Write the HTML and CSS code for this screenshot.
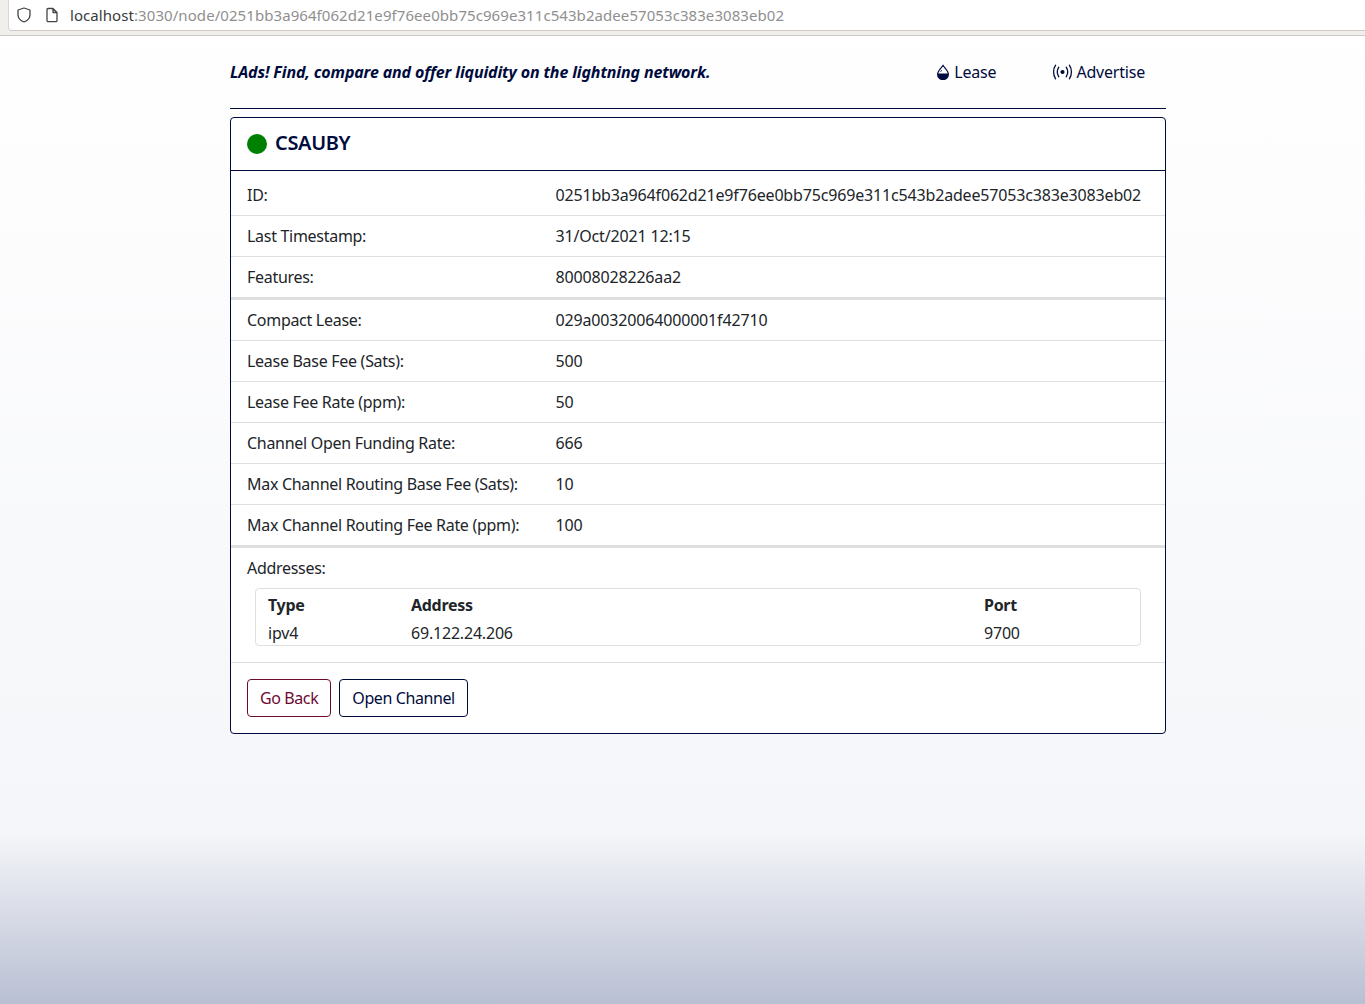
FILE: index.html
```html
<!DOCTYPE html>
<html lang="en">
<head>
<meta charset="utf-8">
<title>LAds</title>
<link rel="stylesheet" href="styles.css">
</head>
<body>
<div class="toolbar">
  <div class="urlbar">
    <svg class="shield" viewBox="0 0 16 16" width="16" height="16"><path d="M8 1 L14 3 V7.5 C14 11 11.5 13.8 8 15 C4.5 13.8 2 11 2 7.5 V3 Z" fill="none" stroke="#444" stroke-width="1.3" stroke-linejoin="round"/></svg>
    <svg class="doc" viewBox="0 0 16 16" width="16" height="16"><path d="M3 2.5 a1 1 0 0 1 1-1 h5 l4 4 v8 a1.2 1.2 0 0 1-1.2 1.2 h-7.6 a1.2 1.2 0 0 1-1.2-1.2 Z M9 1.5 v4 h4" fill="none" stroke="#444" stroke-width="1.3" stroke-linejoin="round"/></svg>
    <span class="url"><span class="host">localhost</span>:3030/node/0251bb3a964f062d21e9f76ee0bb75c969e311c543b2adee57053c383e3083eb02</span>
  </div>
</div>
<main class="page">
  <header class="header">
    <div class="tagline">LAds! Find, compare and offer liquidity on the lightning network.</div>
    <nav class="nav">
      <a class="nav-link lease">
        <svg viewBox="0 0 16 16" width="16" height="16"><path d="M8 1.2 C6.4 4 2.6 6.8 2.6 10.2 A5.4 5.4 0 0 0 13.4 10.2 C13.4 6.8 9.6 4 8 1.2 Z" fill="none" stroke="#000b3d" stroke-width="1.2" stroke-linejoin="round"/><path d="M2.6 9.4 H13.4 V10.2 A5.4 5.4 0 0 1 2.6 10.2 Z" fill="#000b3d"/><path d="M6.6 6.2 L5.6 7.8" fill="none" stroke="#000b3d" stroke-width="0.9"/></svg>
        Lease
      </a>
      <a class="nav-link advertise">
        <svg viewBox="0 0 21 16" width="21" height="16"><circle cx="10.5" cy="8" r="2.1" fill="#000b3d"/><path d="M6.8 3.2 C5 6 5 10 6.8 12.8 M14.2 3.2 C16 6 16 10 14.2 12.8 M3.6 1.2 C0.9 5.2 0.9 10.8 3.6 14.8 M17.4 1.2 C20.1 5.2 20.1 10.8 17.4 14.8" fill="none" stroke="#000b3d" stroke-width="1.3" stroke-linecap="round"/></svg>
        Advertise
      </a>
    </nav>
  </header>
  <section class="card">
    <div class="card-header"><span class="dot"></span><h1 class="alias">CSAUBY</h1></div>
    <ul class="group group-first">
      <li class="row"><span class="label">ID:</span><span class="value">0251bb3a964f062d21e9f76ee0bb75c969e311c543b2adee57053c383e3083eb02</span></li>
      <li class="row"><span class="label">Last Timestamp:</span><span class="value">31/Oct/2021 12:15</span></li>
      <li class="row"><span class="label">Features:</span><span class="value">80008028226aa2</span></li>
    </ul>
    <ul class="group">
      <li class="row"><span class="label">Compact Lease:</span><span class="value">029a00320064000001f42710</span></li>
      <li class="row"><span class="label">Lease Base Fee (Sats):</span><span class="value">500</span></li>
      <li class="row"><span class="label">Lease Fee Rate (ppm):</span><span class="value">50</span></li>
      <li class="row"><span class="label">Channel Open Funding Rate:</span><span class="value">666</span></li>
      <li class="row"><span class="label">Max Channel Routing Base Fee (Sats):</span><span class="value">10</span></li>
      <li class="row"><span class="label">Max Channel Routing Fee Rate (ppm):</span><span class="value">100</span></li>
    </ul>
    <div class="addresses">
      <div class="addr-title">Addresses:</div>
      <div class="addr-box">
        <table class="addr-table">
          <thead><tr><th class="c-type">Type</th><th class="c-addr">Address</th><th>Port</th></tr></thead>
          <tbody><tr><td>ipv4</td><td>69.122.24.206</td><td>9700</td></tr></tbody>
        </table>
      </div>
    </div>
    <div class="card-footer">
      <button class="btn btn-back">Go Back</button>
      <button class="btn btn-open">Open Channel</button>
    </div>
  </section>
</main>
</body>
</html>
```
FILE: styles.css
```css
* { box-sizing: border-box; }
html, body { margin: 0; height: 100%; }
body {
  height: 1004px;
  overflow: hidden;
  font-family: "Noto Sans", sans-serif;
  font-size: 16px;
  color: #212529;
  background: linear-gradient(to bottom, #ffffff 0, #f5f6f9 832px, #b9bfd3 1004px);
}
.toolbar {
  height: 36px;
  background: #f0efec;
  border-bottom: 1px solid #cfcac5;
  padding-left: 8px;
}
.urlbar {
  height: 31px;
  background: #fff;
  border: 1px solid #d8d6d2;
  border-top: 0;
  border-right: 0;
  border-bottom-color: #cfcac5;
  border-radius: 0 0 0 4px;
  display: flex;
  align-items: center;
  padding-left: 7px;
}
.shield { margin-right: 12px; }
.doc { margin-right: 10px; }
.url { font-size: 15px; color: #8f8f8f; letter-spacing: 0.07px; }
.host { color: #3a3a3a; }
.page { width: 936px; margin: 0 auto 0 230px; }
.header {
  height: 73px;
  border-bottom: 1px solid #000b3d;
  display: flex;
  align-items: center;
  justify-content: space-between;
}
.tagline { font-weight: 700; font-style: italic; color: #000b3d; font-size: 16px; letter-spacing: -0.14px; }
.nav { display: flex; }
.nav-link { display: flex; align-items: center; gap: 3px; color: #000b3d; font-size: 16px; letter-spacing: -0.2px; }
.lease { margin-right: 56px; }
.advertise { margin-right: 21px; }
.card {
  margin-top: 8px;
  background: #fff;
  border: 1px solid #000b3d;
  border-radius: 4px;
}
.card-header {
  height: 53px;
  border-bottom: 1px solid #000b3d;
  display: flex;
  align-items: center;
  padding-left: 16px;
  gap: 8px;
}
.dot { width: 20px; height: 20px; border-radius: 50%; background: #008000; }
.alias { margin: 0 0 4px; font-size: 20px; font-weight: 600; letter-spacing: -0.35px; color: #000b3d; }
.group { list-style: none; margin: 0; padding: 0; border-bottom: 3px solid #dfdfdf; }
.group-first { padding-top: 4px; }
.row {
  height: 41px;
  display: grid;
  grid-template-columns: 308.5px 1fr;
  align-items: center;
  padding-left: 16px;
  border-bottom: 1px solid #dfdfdf;
}
.row:last-child { border-bottom: 0; height: 40px; }
.label { letter-spacing: -0.29px; }
.value { letter-spacing: -0.165px; }
.addresses { padding: 8px 24px 16px 16px; border-bottom: 1px solid #dfdfdf; }
.addr-title { height: 24px; line-height: 24px; margin-bottom: 8px; letter-spacing: -0.3px; }
.addr-box { margin-left: 8px; border: 1px solid #dfdfdf; border-radius: 4px; padding: 2px 12px 0; height: 58px; }
.addr-table { width: 100%; border-collapse: collapse; table-layout: fixed; letter-spacing: -0.2px; }
.addr-table th, .addr-table td { padding: 0; text-align: left; height: 28px; }
.addr-table th { font-weight: 700; letter-spacing: -0.3px; }
.c-type { width: 143px; }
.c-addr { width: 573px; }
.card-footer { padding: 16px; display: flex; gap: 8px; }
.btn {
  height: 38px;
  padding: 0 12px;
  background: #fff;
  border: 1px solid #000b3d;
  border-radius: 4px;
  font: inherit;
  letter-spacing: -0.4px;
  color: #000b3d;
}
.btn-back { border-color: #6e0a32; color: #6e0a32; }
```
